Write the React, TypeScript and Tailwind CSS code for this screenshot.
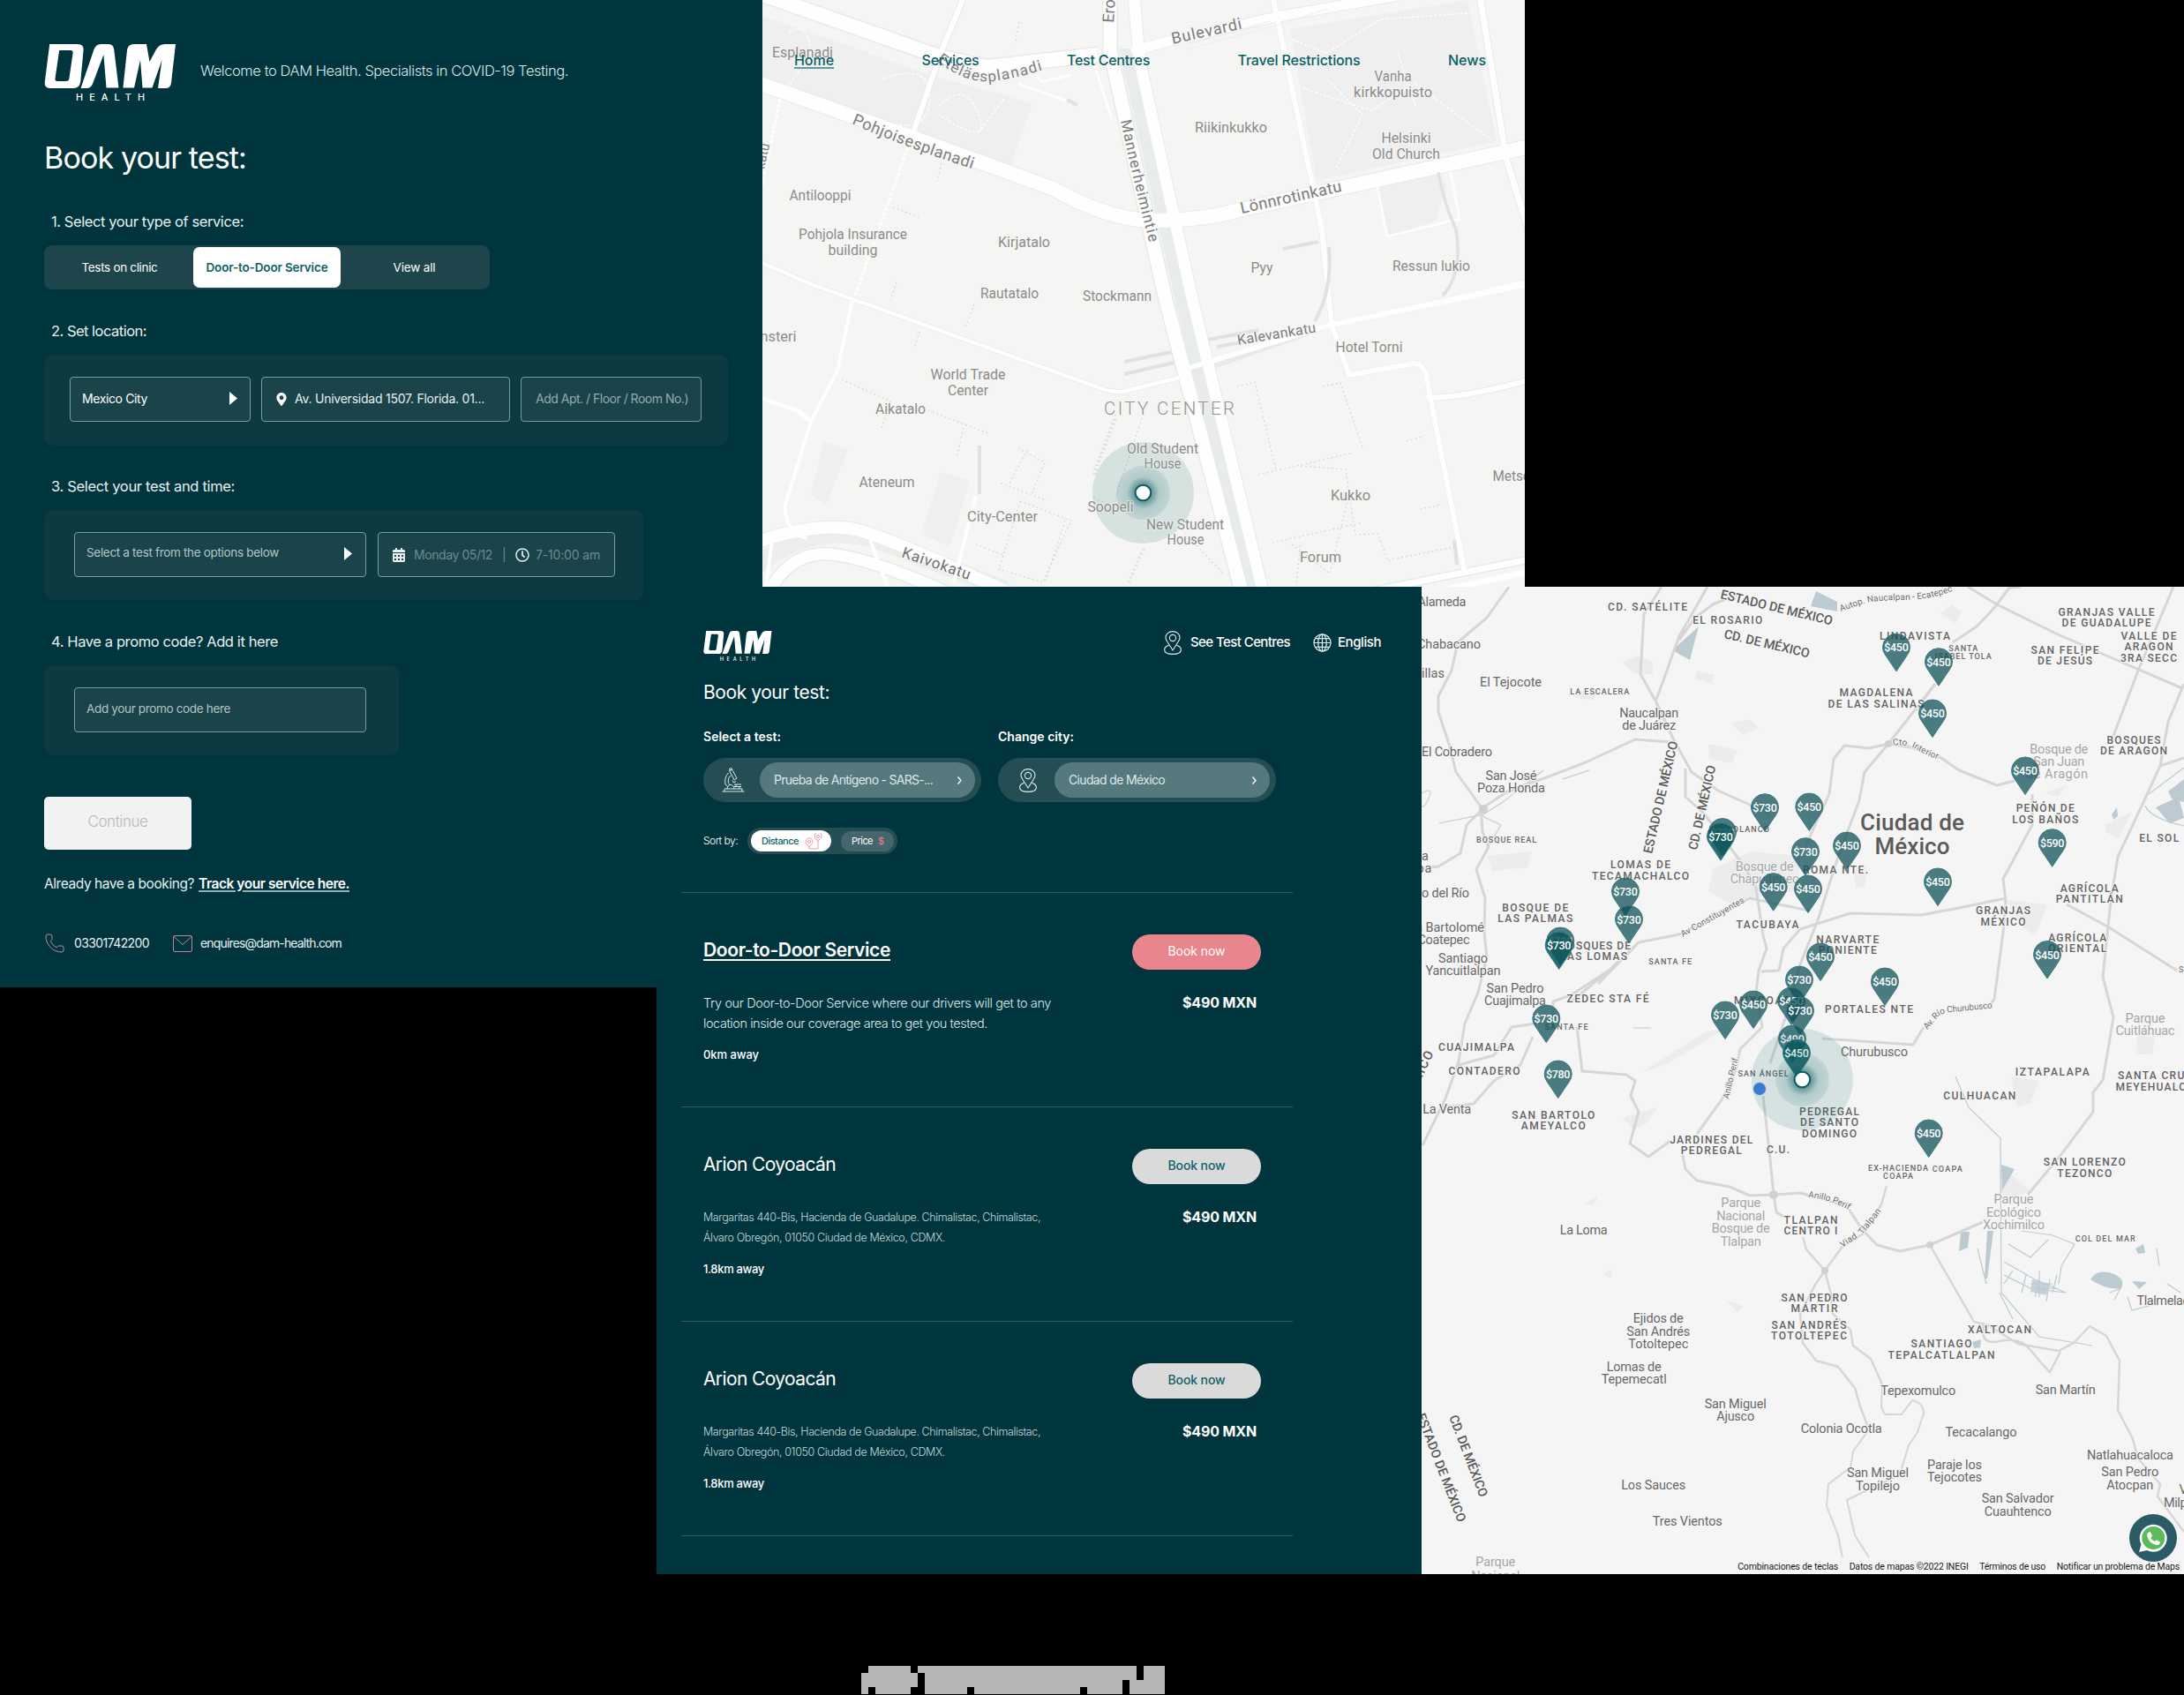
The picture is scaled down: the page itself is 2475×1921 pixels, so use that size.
import { useLayoutEffect, useRef } from "react";
import type { ReactNode } from "react";
import { FaCalendarAlt, FaMapMarkerAlt, FaRegClock, FaWhatsapp } from "react-icons/fa";
import { Phone } from "lucide-react";

/* ---------- Text helper: tracks a single line out to a given width ---------- */

function T({ w, className = "", children }: { w: number; className?: string; children: ReactNode }) {
  const ref = useRef<HTMLSpanElement>(null);
  useLayoutEffect(() => {
    const el = ref.current;
    if (!el) return;
    el.style.letterSpacing = "0px";
    const natural = el.getBoundingClientRect().width;
    const count = (el.textContent || "").length;
    el.style.letterSpacing = `${(w - natural) / count}px`;
  }, [w]);
  return (
    <span ref={ref} className={`inline-block shrink-0 whitespace-nowrap ${className}`}>
      {children}
    </span>
  );
}

/* ---------- Icons ---------- */

function Logo({ className = "" }: { className?: string }) {
  return (
    <svg viewBox="50 50 150 65" className={className} fill="#fff" role="img" aria-label="DAM Health">
      <path
        fillRule="evenodd"
        d="M56.2 50H88q7.200 0 6.600 7L91.300 92q-.8 8-8.300 8H56.500q-6.300 0-5.800-6.500zM67.200 57L62.500 89q-.3 3 2.200 3H75q3.100 0 3.400-3L82.600 60q.3-3-2.600-3z"
      />
      <path d="M91.500 100L106.500 56q2-6 8-6H123q5.500 0 6.200 6L134.500 99.500H120.500L117.400 62L105 95q-2 5-7 5z" />
      <path d="M139.400 99.500L144 57q.8-7 8-7H166L169.500 70L177 56q3.300-6 10-6H199L194 94q-.7 6-6.500 6H179L183.500 68L172.500 99.500H161.500L159 68L152 99.500z" />
      <text x="86" y="114.300" fontSize="10.800" fontWeight="500" fontFamily="Inter, sans-serif" textLength="78" lengthAdjust="spacing">
        HEALTH
      </text>
    </svg>
  );
}

function Arrow() {
  return (
    <svg viewBox="0 0 9 15" className="h-[15px] w-[9px]" fill="#fff">
      <path d="M0 0L9 7.500L0 15z" />
    </svg>
  );
}

function PinOutline() {
  return (
    <svg viewBox="0 0 20 27" className="h-[27px] w-5 shrink-0" fill="none" stroke="#dcebec" strokeWidth="1.100">
      <path d="M10 22L3.800 12.200Q2 9.600 2 7.600A8 7 0 0 1 18 7.600Q18 9.600 16.200 12.200z" />
      <circle cx="10" cy="8" r="3.600" />
      <path d="M5.600 16.200Q.6 18 .6 21.200Q.6 26.400 10 26.400T19.400 21.200Q19.400 18 14.400 16.200" />
    </svg>
  );
}

function GlobeGrid() {
  return (
    <svg viewBox="0 0 22 22" className="h-[21px] w-[21px] shrink-0" fill="none" stroke="#dcebec" strokeWidth="1.300">
      <circle cx="11" cy="11" r="10" />
      <ellipse cx="11" cy="11" rx="5" ry="10" />
      <path d="M11 1V21M1 11H21M2.600 6H19.400M2.600 16H19.400" />
    </svg>
  );
}

function Microscope() {
  return (
    <svg viewBox="0 0 26 28" className="h-7 w-[26px]" fill="none" stroke="#dcebec" strokeWidth="1">
      <path d="M.5 27H25.500M3 24H23M3 27V24M23 27V24M6 24Q6.500 19.500 10 19.500T14 24M14 19H22M14 21.500H22M16 21.500V19M20 24V21.500" />
      <path d="M8.500 3.500L11.500 2L17 12L14.200 14zM8.500 1.500L11 .5L11.500 2L9.300 3zM12 14.500L13.500 17L16 15.500" />
      <path d="M7.500 6Q2.500 11 4 19L6.500 21M10 9Q6.500 12 7.500 17.500L9 19.500" />
    </svg>
  );
}

function Envelope() {
  return (
    <svg viewBox="0 0 22 19" className="h-[19px] w-[22px] shrink-0" fill="none" stroke="#bd8792" strokeWidth="1">
      <rect x=".5" y=".5" width="21" height="18" rx="1.500" />
      <path d="M1 1.500L11 10.500L21 1.500" />
    </svg>
  );
}

function RouteIcon() {
  return (
    <svg viewBox="0 0 20 19" className="h-[19px] w-5" fill="none" stroke="#ec9aa2" strokeWidth="1">
      <path d="M15 9.500L11.500 5A4 4 0 1 1 18.500 5zM5 16L1.200 11.200A4 4 0 1 1 8.800 11.200z" />
      <circle cx="15" cy="4" r="1.500" />
      <circle cx="5" cy="10" r="1.500" />
      <path d="M5 16V18H15V9.500" />
    </svg>
  );
}

/* ---------- Booking form ---------- */

const fieldBox = "flex items-center rounded-[4px] border border-[#6f9fa4] bg-[#1b434a] text-sm";

function StepTitle({ w, className = "", children }: { w: number; className?: string; children: ReactNode }) {
  return (
    <h2 className={`pl-[8px] text-[16.500px] leading-6 text-[#e6f0f1] ${className}`}>
      <T w={w}>{children}</T>
    </h2>
  );
}

function BookingForm() {
  return (
    <section className="col-span-2 col-start-1 row-span-2 row-start-1 flex flex-col items-start bg-[#00353d] pt-[50px] pl-[50px] text-white">
      <header className="flex h-16 items-start gap-[27px]">
        <Logo className="h-[65px] w-[150px]" />
        <p className="mt-[18px] text-[16.500px] leading-6 font-light text-[#d9e9eb]">
          <T w={417}>Welcome to DAM Health. Specialists in COVID-19 Testing.</T>
        </p>
      </header>

      <h1 className="mt-[45px] text-[34px] leading-10">
        <T w={229}>Book your test:</T>
      </h1>

      <StepTitle w={218} className="mt-[40px]">1. Select your type of service:</StepTitle>
      <div className="mt-[15px] grid h-[50px] w-[505px] grid-cols-3 rounded-[9px] bg-[#1e454c] p-[2px] text-[13.500px]">
        <button className="flex items-center justify-center"><T w={86}>Tests on clinic</T></button>
        <button className="flex items-center justify-center rounded-[7px] bg-white font-semibold text-[#0d6267]">
          <T w={138}>Door-to-Door Service</T>
        </button>
        <button className="flex items-center justify-center"><T w={48}>View all</T></button>
      </div>

      <StepTitle w={108} className="mt-[35px]">2. Set location:</StepTitle>
      <div className="mt-[15px] flex h-[103px] w-[775px] items-start gap-3 rounded-[10px] bg-[#0d3a41] pt-[25px] pl-[29px]">
        <div className={`${fieldBox} h-[51px] w-[205px] justify-between pr-[14px] pb-[2px] pl-[13px]`}>
          <T w={74}>Mexico City</T>
          <Arrow />
        </div>
        <div className={`${fieldBox} h-[51px] w-[282px] gap-[9px] pb-[2px] pl-4`}>
          <FaMapMarkerAlt className="mt-[2px] h-[15px] w-[12px]" />
          <T w={215} className="text-[#e6f0f1]">Av. Universidad 1507. Florida. 01...</T>
        </div>
        <div className={`${fieldBox} h-[51px] w-[205px] pb-[2px] pl-4`}>
          <T w={173} className="text-[#93abaf]">Add Apt. / Floor / Room No.)</T>
        </div>
      </div>

      <StepTitle w={208} className="mt-[34px]">3. Select your test and time:</StepTitle>
      <div className="mt-[15px] flex h-[102px] w-[679px] items-start gap-[13px] rounded-[10px] bg-[#0d3a41] pt-[25px] pl-[34px]">
        <div className={`${fieldBox} h-[51px] w-[331px] justify-between pr-[15px] pb-[3px] pl-[13px]`}>
          <T w={218} className="text-[13.500px] text-[#b3c5c8]">Select a test from the options below</T>
          <Arrow />
        </div>
        <div className={`${fieldBox} h-[51px] w-[269px] pl-[15px] text-[#6b8b90]`}>
          <FaCalendarAlt className="size-4 text-[#e6eeef]" />
          <T w={89} className="ml-[9px]">Monday 05/12</T>
          <span className="ml-[11px] w-[15px]">|</span>
          <FaRegClock className="size-4 text-[#e6eeef]" />
          <T w={73} className="ml-[7px]">7-10:00 am</T>
        </div>
      </div>

      <StepTitle w={257} className="mt-[35px]">4. Have a promo code? Add it here</StepTitle>
      <div className="mt-[15px] h-[102px] w-[402px] rounded-[10px] bg-[#0d3a41] pt-[25px] pl-[34px]">
        <div className={`${fieldBox} h-[51px] w-[331px] pb-[2px] pl-[13px]`}>
          <T w={163} className="text-[13.500px] text-[#b3c5c8]">Add your promo code here</T>
        </div>
      </div>

      <button className="mt-[47px] flex h-[60px] w-[167px] items-center justify-center rounded-[5px] bg-[#f2f2f2] pb-[3px] text-[17px] font-light text-[#b9b9b9]">
        <T w={68}>Continue</T>
      </button>

      <p className="mt-[27px] flex gap-[5px] text-[15.500px] leading-6 text-[#e6f0f1]">
        <T w={170}>Already have a booking?</T>
        <a>
          <T w={171} className="font-semibold text-white underline decoration-[#8fb0b4] decoration-2 underline-offset-2">
            Track your service here.
          </T>
        </a>
      </p>

      <div className="mt-[43px] flex h-6 items-center text-sm text-[#e6f0f1]">
        <Phone className="size-6 text-[#bd8792]" strokeWidth={1} />
        <T w={85} className="ml-[10px]">03301742200</T>
        <span className="ml-[27px]"><Envelope /></span>
        <T w={160} className="ml-[9px]">enquires@dam-health.com</T>
      </div>
    </section>
  );
}

/* ---------- Map drawing primitives ---------- */

type RotatedLabel = { text: string; d: string; size: number; fill: string; len?: number; weight?: number };

function PathLabels({ id, items, font }: { id: string; items: RotatedLabel[]; font: string }) {
  return (
    <g fontFamily={font} stroke="#f6f6f5" strokeWidth="2" paintOrder="stroke">
      {items.map((l, i) => (
        <g key={i}>
          <path id={`${id}-${i}`} d={l.d} fill="none" stroke="none" />
          <text fontSize={l.size} fill={l.fill} fontWeight={l.weight ?? 400} textLength={l.len}>
            <textPath href={`#${id}-${i}`} textLength={l.len}>{l.text}</textPath>
          </text>
        </g>
      ))}
    </g>
  );
}

function LocationMarker({ id }: { id: string }) {
  return (
    <g>
      <defs>
        <radialGradient id={id}>
          <stop offset="0.280" stopColor="#0b6166" stopOpacity="0.620" />
          <stop offset="0.600" stopColor="#0b6166" stopOpacity="0.180" />
          <stop offset="1" stopColor="#0b6166" stopOpacity="0.100" />
        </radialGradient>
      </defs>
      <circle cx="431.400" cy="558.500" r="57.500" fill="#0b6166" fillOpacity="0.130" />
      <circle cx="431.400" cy="558.500" r="30.500" fill={`url(#${id})`} />
      <circle cx="431.400" cy="558.500" r="8.800" fill="#fff" stroke="#0b5b61" strokeWidth="2" />
    </g>
  );
}

/* ---------- Helsinki map ---------- */

type Label = [text: string, cx: number, y: number, w: number];

const helsinkiLabels: Label[] = [
  ["Esplanadi", 45.5, 65, 69],
  ["Vanha", 714.6, 92, 42],
  ["kirkkopuisto", 714.6, 110, 89],
  ["Riikinkukko", 531, 150, 82],
  ["Helsinki", 729.5, 162, 56],
  ["Old Church", 729.5, 180, 77],
  ["Antilooppi", 65.5, 227, 70],
  ["Pohjola Insurance", 102.5, 271, 123],
  ["building", 102.5, 289, 56],
  ["Kirjatalo", 296.5, 280, 59],
  ["Pyy", 566, 309, 25],
  ["Ressun lukio", 758, 307, 88],
  ["Rautatalo", 280, 338, 66],
  ["Stockmann", 402, 341, 78],
  ["nsteri", 18, 387, 41],
  ["Hotel Torni", 687.5, 399, 76],
  ["World Trade", 233, 430, 85],
  ["Center", 233, 448, 46],
  ["Aikatalo", 156.5, 469, 57],
  ["Old Student", 453.5, 514, 81],
  ["House", 453.5, 531, 42],
  ["Ateneum", 141, 552, 63],
  ["Soopeli", 394.5, 580, 52],
  ["City-Center", 272, 591, 80],
  ["New Student", 479, 600, 88],
  ["House", 479.5, 617, 42],
  ["Kukko", 666.5, 567, 45],
  ["Forum", 632.5, 637, 47],
  ["Metso", 849, 545, 43],
];

const helsinkiStreets: RotatedLabel[] = [
  { text: "Eteläesplanadi", d: "M197 69Q232 96 262 92T328 76", size: 17, fill: "#808080", len: 128 },
  { text: "Bulevardi", d: "M465 50L546 32", size: 18, fill: "#7d7d7d", len: 81 },
  { text: "Erottaja", d: "M398 26L402 -40", size: 18, fill: "#7d7d7d" },
  { text: "Pohjoisesplanadi", d: "M101 140Q165 168 240 192", size: 18, fill: "#7d7d7d", len: 146 },
  { text: "Mannerheimintie", d: "M406 137Q420 205 440 280", size: 17, fill: "#7d7d7d", len: 142 },
  { text: "Lönnrotinkatu", d: "M543 242L660 216", size: 18, fill: "#7d7d7d", len: 117 },
  { text: "Kalevankatu", d: "M539 391L630 376", size: 16, fill: "#7d7d7d", len: 90 },
  { text: "Kaivokatu", d: "M157 631L237 658", size: 17, fill: "#6f6f6f", len: 81 },
  { text: "katu", d: "M2 192L9 160", size: 15, fill: "#808080" },
];

const nav: [string, number][] = [
  ["Home", 45],
  ["Services", 65],
  ["Test Centres", 94],
  ["Travel Restrictions", 139],
  ["News", 43],
];

function HelsinkiMap() {
  return (
    <section className="relative col-span-2 col-start-3 row-start-1 overflow-hidden bg-[#f5f5f3]">
      <svg viewBox="0 0 864 665" className="h-[665px] w-[864px]">
        <g fill="#efeff0">
          <path d="M0 18L120 60L190 85L306 117L281 190L182 160L0 92z" />
          <path d="M598 33L799 0L832 160L628 205z" />
          <path d="M697 212L766 195L775 210L763 250L708 268z" />
          <path d="M70 500L97 510L72 572L55 560zM202 535L235 545L212 620L180 605z" />
        </g>
        <path d="M404 55L421 55L499 360L563 665L543 665L470 350z" fill="#e9ecec" />
        <path d="M-5 640Q60 590 130 612L275 668" fill="none" stroke="#eceeed" strokeWidth="20" />

        <g fill="none" stroke="#e8eae9" strokeLinejoin="round">
          <path d="M-5 -8L200 64L255 76L380 62" strokeWidth="19" />
          <path d="M-5 94L182 160L330 214Q390 248 440 250Q500 250 540 238L870 166" strokeWidth="18" />
          <path d="M394 -5V57L410 130L457 340L543 670" strokeWidth="18" />
          <path d="M421 -5L427 67L485 330L567 670" strokeWidth="15" />
          <path d="M-5 614Q60 592 105 600Q140 608 280 672" strokeWidth="16" />
          <path d="M8 670Q28 632 64 628Q105 625 210 672" strokeWidth="16" />
          <path d="M578 -5L634 260L645 368L665 425L738 412Q750 412 753 430L796 650" strokeWidth="7" />
          <path d="M813 -5L843 180L868 260" strokeWidth="9" />
          <path d="M229 -5L204 55L171 150" strokeWidth="8" />
          <path d="M0 298L55 322L386 441Q400 446 412 443L480 426L645 368L868 322" strokeWidth="6" />
          <path d="M753 451Q800 450 868 431" strokeWidth="8" />
          <path d="M680 672L868 634" strokeWidth="10" />
          <path d="M419 60Q440 50 500 38L578 20L720 -5" strokeWidth="13" />
        </g>
        <g fill="none" stroke="#fefefe" strokeLinejoin="round">
          <path d="M419 60Q440 50 500 38L578 20L720 -5" strokeWidth="11" />
          <path d="M0 298L55 322L386 441Q400 446 412 443L480 426" strokeWidth="4.500" />
          <path d="M480 418L645 368L868 322" strokeWidth="6" />
          <path d="M578 -5L634 260L645 368L665 425L738 412Q750 412 753 430L796 650" strokeWidth="6" />
          <path d="M813 -5L843 180L868 260" strokeWidth="7" />
          <path d="M229 -5L204 55L171 150" strokeWidth="6" />
          <path d="M171 150L105 335M20 112L0 210" strokeWidth="3" strokeDasharray="4 2" />
          <path d="M102 340L85 420L55 478L25 575Q28 604 50 610" strokeWidth="4" />
          <path d="M-5 450L39 465L55 478" strokeWidth="5" />
          <path d="M-5 -8L200 64L255 76L380 62" strokeWidth="16" />
          <path d="M-5 94L182 160L330 214Q390 248 440 250Q500 250 540 238L870 166" strokeWidth="16" />
          <path d="M394 -5V57L410 130L457 340L543 670" strokeWidth="15" />
          <path d="M421 -5L427 67L485 330L567 670" strokeWidth="13" />
          <path d="M-5 614Q60 592 105 600Q140 608 280 672" strokeWidth="14" />
          <path d="M8 670Q28 632 64 628Q105 625 210 672" strokeWidth="13" />
          <path d="M753 451Q800 450 868 431" strokeWidth="6" />
          <path d="M680 672L868 634M720 680L868 648" strokeWidth="7" />
          <path d="M242 562L217 660M11 612L4 665M122 612L142 665" strokeWidth="4" />
          <path d="M290 95L355 118M310 84L316 93L350 85M375 70L396 135M697 212L708 268L790 248L780 195M772 340L868 318" strokeWidth="2.500" />
          <path d="M30 38Q50 20 55 60L28 100M135 90Q190 70 190 110T145 140M200 120Q230 90 245 130T200 130M245 150L275 110M600 45L640 60L700 22L799 15M612 100L690 125L740 95L828 160M650 190L680 130L640 90M720 60L740 120" strokeWidth="1.500" strokeDasharray="3 2" />
        </g>
        <path d="M480 56L578 30L640 10M482 50L575 24" fill="none" stroke="#eceeed" strokeWidth="1" />
        <g fill="none" stroke="#e0e2e1" strokeWidth="4">
          <path d="M766 195Q772 230 786 260Q794 310 771 335" strokeWidth="3.500" />
          <path d="M590 282L630 274M642 280Q646 330 626 364M410 410L463 399M410 424L466 411M505 385L562 374M515 393L570 383" />
          <path d="M345 113L357 119M246 505V560M784 612L787 640" />
        </g>
        <g fill="none" stroke="#d4d6d6" strokeWidth="1.200" strokeDasharray="2 3">
          <path d="M291 25L286 50M90 430L145 455L135 485M188 465L258 492M228 485L220 518M290 508L320 524L305 560M300 510L280 548M270 548L322 567M292 568L350 590L345 600L318 660L268 645L292 568M375 564L400 575M430 474L400 565M242 617L275 630M343 590L320 660" />
          <path d="M148 235L177 246M203 185L198 205M152 320L145 340M240 345L230 370M178 376L172 394M400 470L375 535M538 438L558 433L582 533M635 438L655 434L680 507M562 538L670 513M610 528L661 532L672 606L698 605L708 635L784 620M578 615L655 598L680 592M600 617L643 650L665 560M730 500L750 494M745 577L770 572M475 600L522 650M605 660L610 615" />
          <path d="M432 622L415 660M400 475L375 540" stroke="#dfe1e0" strokeWidth="3.500" />
        </g>

        <LocationMarker id="glow-helsinki" />

        <g fontFamily="Roboto, sans-serif" fontSize="16" fill="#8c8c8c" textAnchor="middle" stroke="#f5f5f3" strokeWidth="2" paintOrder="stroke" strokeOpacity="0.600">
          {helsinkiLabels.map(([text, cx, y, w], i) => (
            <text key={i} x={cx} y={y} textLength={w} lengthAdjust="spacingAndGlyphs">{text}</text>
          ))}
          <text x="461" y="470" fontSize="20.500" fontWeight="300" fill="#939393" textLength="148">CITY CENTER</text>
        </g>
        <PathLabels id="hel" items={helsinkiStreets} font="Roboto, sans-serif" />
      </svg>

      <nav className="absolute top-[56px] left-[36px] flex gap-[99.500px] text-base leading-6 font-medium text-[#0a5f65]">
        {nav.map(([label, w], i) => (
          <a key={label}>
            <T w={w} className={i === 0 ? "underline decoration-[#5f9a9e] decoration-2 underline-offset-2" : ""}>
              {label}
            </T>
          </a>
        ))}
      </nav>
    </section>
  );
}

/* ---------- Test centre list ---------- */

function SelectPill({ icon, label, w }: { icon: ReactNode; label: string; w: number }) {
  return (
    <div className="flex h-[50px] w-[315px] items-center rounded-full bg-[#254d54] pr-[7px]">
      <span className="flex flex-1 items-center justify-center pl-[4px]">{icon}</span>
      <div className="flex h-10 w-[244px] items-center justify-between rounded-full bg-[#56797e] pr-[15px] pl-4 text-sm text-[#dde8ea]">
        <T w={w}>{label}</T>
        <svg viewBox="0 0 5 9" className="h-[9px] w-[5px]" fill="none" stroke="#fff" strokeWidth="1.300">
          <path d="M.5.5L4 4.500L.5 8.500" />
        </svg>
      </div>
    </div>
  );
}

type Centre = { name: string; nameW: number; lines: [string, number][]; away: string; awayW: number; featured?: boolean };

const arion: Centre = {
  name: "Arion Coyoacán",
  nameW: 150,
  lines: [
    ["Margaritas 440-Bis, Hacienda de Guadalupe. Chimalistac, Chimalistac,", 382],
    ["Álvaro Obregón, 01050 Ciudad de México, CDMX.", 274],
  ],
  away: "1.8km away",
  awayW: 69,
};

const centres: Centre[] = [
  {
    name: "Door-to-Door Service",
    nameW: 212,
    lines: [
      ["Try our Door-to-Door Service where our drivers will get to any", 394],
      ["location inside our coverage area to get you tested.", 322],
    ],
    away: "0km away",
    awayW: 63,
    featured: true,
  },
  arion,
  arion,
];

function CentreRow({ c }: { c: Centre }) {
  return (
    <li className="flex h-[243px] justify-between border-b border-[#2f6065] pr-[36px] pl-[25px]">
      <div className="pt-[53px]">
        <h3 className={`text-[21px] leading-6 ${c.featured ? "font-semibold" : ""}`}>
          <T w={c.nameW} className={c.featured ? "underline decoration-2 underline-offset-[3px]" : ""}>{c.name}</T>
        </h3>
        <p
          className={`mt-[36px] flex flex-col items-start leading-[23px] font-light ${
            c.featured ? "text-[14.500px] text-[#dbe9eb]" : "text-[12.500px] text-[#c2d8db]"
          }`}
        >
          {c.lines.map(([line, w]) => (
            <T key={line} w={w}>{line}</T>
          ))}
        </p>
        <p className="mt-[14px] text-[13px] leading-5 font-medium"><T w={c.awayW}>{c.away}</T></p>
      </div>
      <div className="flex w-[146px] flex-col items-center pt-[47px]">
        <button
          className={`flex h-10 w-[146px] items-center justify-center rounded-full pb-[2px] text-sm ${
            c.featured ? "bg-[#e9858c] text-white" : "bg-[#dadada] font-medium text-[#0d6267]"
          }`}
        >
          <T w={65}>Book now</T>
        </button>
        <p className="mt-[25px] self-end pr-[5px] text-base leading-6 font-bold"><T w={84}>$490 MXN</T></p>
      </div>
    </li>
  );
}

function CentreList() {
  return (
    <section className="col-span-2 col-start-2 row-span-2 row-start-2 bg-[#00353d] text-white">
      <div className="pl-[53px]">
        <header className="flex h-[84px] items-end justify-between pr-[46px]">
          <Logo className="h-[34px] w-[78px]" />
          <div className="flex h-[34px] items-start text-[15px] leading-7 font-medium">
            <PinOutline />
            <T w={113} className="mt-[-1px] ml-[10px]">See Test Centres</T>
            <span className="mt-[3px] ml-[26px]"><GlobeGrid /></span>
            <T w={49} className="mt-[-1px] ml-[7px]">English</T>
          </div>
        </header>
        <h2 className="mt-[24px] text-[21px] leading-6"><T w={143}>Book your test:</T></h2>

        <div className="mt-[28px] flex gap-[19px]">
          <div className="w-[315px]">
            <p className="h-[34px] text-sm leading-5 font-semibold"><T w={88}>Select a test:</T></p>
            <SelectPill icon={<Microscope />} label="Prueba de Antígeno - SARS-..." w={180} />
          </div>
          <div className="w-[315px]">
            <p className="h-[34px] text-sm leading-5 font-semibold"><T w={86}>Change city:</T></p>
            <SelectPill icon={<PinOutline />} label="Ciudad de México" w={109} />
          </div>
        </div>

        <div className="mt-[29px] flex h-[30px] items-center text-xs">
          <T w={39} className="font-light">Sort by:</T>
          <div className="ml-[11px] flex h-[30px] w-[170px] items-center justify-between rounded-full bg-[#254d54] px-1">
            <span className="flex h-6 w-[91px] items-center justify-between rounded-full bg-white pr-[10px] pl-3 text-[11px] font-medium text-[#0d6267]">
              <T w={42}>Distance</T>
              <RouteIcon />
            </span>
            <span className="flex h-[23px] w-[60px] items-center gap-[6px] rounded-full bg-[#45666c] pl-3 text-[11px]">
              <T w={24}>Price</T>
              <span className="text-[#e9858c]">$</span>
            </span>
          </div>
        </div>
      </div>

      <ul className="mt-[43px] ml-[28px] w-[693px] border-t border-[#2f6065]">
        {centres.map((c, i) => (
          <CentreRow key={i} c={c} />
        ))}
      </ul>
    </section>
  );
}

/* ---------- Mexico City map ---------- */

const towns: Label[] = [
  ["Alameda", 23, 22, 55], ["Chabacano", 31, 70, 72], ["illas", 13, 103, 26], ["El Tejocote", 101, 113, 70],
  ["Naucalpan", 257.7, 148, 67], ["de Juárez", 257.7, 162, 61], ["El Cobradero", 40, 192, 80],
  ["San José", 101.5, 219, 58], ["Poza Honda", 101.5, 233, 77], ["a", 4, 310, 8], ["pa", 3, 324, 17],
  ["o del Río", 27, 352, 54], ["n Bartolomé", 32, 391, 78], ["Coatepec", 25, 405, 59],
  ["Santiago", 47, 426, 56], ["Yancuitlalpan", 47, 440, 85], ["San Pedro", 106, 460, 65], ["Cuajimalpa", 106, 474, 70],
  ["Churubusco", 513, 531.5, 76], ["La Venta", 28.7, 597, 55], ["La Loma", 183.7, 733.5, 54],
  ["Ejidos de", 268.3, 834, 57], ["San Andrés", 268.3, 848.7, 72], ["Totoltepec", 268.3, 863, 68],
  ["Lomas de", 240.7, 888.7, 62], ["Tepemecatl", 240.7, 903, 74], ["San Miguel", 355.7, 930.5, 70], ["Ajusco", 355.7, 945, 43],
  ["Los Sauces", 262.7, 1023, 73], ["Tres Vientos", 301.3, 1064, 79], ["Tepexomulco", 562.7, 915.6, 85],
  ["San Martín", 729.7, 914.5, 68], ["Colonia Ocotla", 475.7, 959, 92], ["Tecacalango", 634, 963, 81],
  ["Paraje los", 604, 1000, 62], ["Tejocotes", 604, 1014, 62], ["Natlahuacaloca", 803, 989.4, 98],
  ["San Pedro", 802.7, 1008, 65], ["Atocpan", 802.7, 1022.5, 53], ["San Miguel", 517, 1009, 70], ["Topilejo", 517, 1023.6, 50],
  ["San Salvador", 675.7, 1038, 82], ["Cuauhtenco", 675.7, 1052.6, 76], ["Milpa", 858, 1042.5, 34], ["Villa", 871, 1027.6, 25],
  ["Tlalmelaca", 844, 813.5, 67],
];

const parks: Label[] = [
  ["Bosque de", 388.7, 321.5, 66], ["Chapultepec", 388.7, 336, 78], ["Bosque de", 722.3, 188.6, 66],
  ["San Juan", 722.3, 203, 58], ["de Aragón", 720, 217, 70], ["Parque", 820, 494, 45], ["Cuitláhuac", 820, 508, 67],
  ["Parque", 361.7, 703.3, 45], ["Nacional", 361.7, 718, 55], ["Bosque de", 361.7, 732, 66], ["Tlalpan", 361.7, 746.6, 46],
  ["Parque", 671, 699.3, 45], ["Ecológico", 671, 713.5, 62], ["Xochimilco", 671, 728, 70],
  ["Parque", 83.7, 1110, 45], ["Nacional", 83.7, 1126, 55],
];

const areas: Label[] = [
  ["CD. SATÉLITE", 256, 26.5, 90], ["EL ROSARIO", 346.7, 42, 79], ["LOMAS DE", 248, 319, 68], ["TECAMACHALCO", 248, 332, 110],
  ["BOSQUE DE", 128.7, 367.6, 75], ["LAS PALMAS", 128.7, 380, 85], ["BOSQUES DE", 197, 410.5, 80], ["LAS LOMAS", 195, 423, 76],
  ["ZEDEC STA FÉ", 211, 471, 93], ["TACUBAYA", 392, 387, 71], ["MIXCOAC", 386, 473, 64], ["CUAJIMALPA", 62, 526, 86],
  ["CONTADERO", 71, 553, 81], ["LINDAVISTA", 559, 60, 80], ["GRANJAS VALLE", 776, 33, 109], ["DE GUADALUPE", 776, 45, 101],
  ["SAN FELIPE", 729, 76, 77], ["DE JESÚS", 729, 88, 62], ["VALLE DE", 824, 60, 63], ["ARAGON", 824, 72, 55], ["3RA SECC", 824, 84.5, 64],
  ["MAGDALENA", 515, 124, 83], ["DE LAS SALINAS", 515, 136.5, 109], ["BOSQUES", 807, 178, 61], ["DE ARAGON", 807, 190, 76],
  ["PEÑÓN DE", 706.7, 255, 66], ["LOS BAÑOS", 706.7, 267.6, 75], ["EL SOL", 835.7, 289, 45], ["ROMA NTE.", 469, 325, 74],
  ["AGRÍCOLA", 756.7, 345.5, 66], ["PANTITLÁN", 756.7, 358, 76], ["GRANJAS", 659, 371, 62], ["MÉXICO", 659, 384, 51],
  ["NARVARTE", 482.7, 404, 71], ["PONIENTE", 482.7, 416, 66], ["AGRÍCOLA", 743.3, 402, 66], ["ORIENTAL", 743.3, 414, 66],
  ["PORTALES NTE", 507, 483, 100], ["IZTAPALAPA", 714.7, 554, 84], ["SANTA CRUZ", 831, 558, 84], ["MEYEHUALCO", 831, 571, 89],
  ["SAN BARTOLO", 149.3, 603, 94], ["AMEYALCO", 149.3, 615.3, 73], ["JARDINES DEL", 328.3, 630.6, 94], ["PEDREGAL", 328.3, 643, 69],
  ["C.U.", 404, 642, 26], ["TLALPAN", 441, 722, 61], ["CENTRO I", 441, 734, 61], ["CULHUACAN", 632.3, 581, 82],
  ["PEDREGAL", 462, 599, 68], ["DE SANTO", 462, 611, 66], ["DOMINGO", 462, 623.7, 62], ["SAN LORENZO", 751.3, 656.4, 93],
  ["TEZONCO", 751.3, 669, 62], ["SAN PEDRO", 445, 809.5, 75], ["MÁRTIR", 445, 822, 53], ["SAN ANDRÉS", 439, 841, 85],
  ["TOTOLTEPEC", 439, 853.4, 86], ["XALTOCAN", 655, 846, 72], ["SANTIAGO", 589, 862, 69], ["TEPALCATLALPAN", 589, 874.5, 121],
];

const minors: Label[] = [
  ["LA ESCALERA", 201.7, 122, 67], ["BOSQUE REAL", 96, 290, 68], ["POLANCO", 370, 277.6, 48], ["SANTA FE", 281.7, 427.6, 49],
  ["SANTA FE", 164, 502, 49], ["SANTA", 613.7, 72.6, 33], ["ISABEL TOLA", 613.7, 81.5, 64], ["SAN ÁNGEL", 387, 554.7, 57],
  ["EX-HACIENDA", 540, 661.5, 68], ["COAPA", 540, 670.6, 34], ["COAPA", 595.7, 662.6, 34], ["COL DEL MAR", 774.7, 742, 68],
];

const borders: RotatedLabel[] = [
  { text: "ESTADO DE MÉXICO", d: "M338 13L466 44", size: 14.5, fill: "#5c5c5c", len: 130, weight: 500 },
  { text: "CD. DE MÉXICO", d: "M342 58L441 81", size: 14.5, fill: "#5c5c5c", len: 99, weight: 500 },
  { text: "ESTADO DE MÉXICO", d: "M261 303L291 174", size: 14.5, fill: "#5c5c5c", len: 130, weight: 500 },
  { text: "CD. DE MÉXICO", d: "M312 299L334 201", size: 14.5, fill: "#5c5c5c", len: 98, weight: 500 },
  { text: "CD. DE MÉXICO", d: "M31 941L67 1035", size: 14.5, fill: "#5c5c5c", len: 98, weight: 500 },
  { text: "ESTADO DE MÉXICO", d: "M-6 939L42 1063", size: 14.5, fill: "#5c5c5c", len: 131, weight: 500 },
  { text: "MÉXICO", d: "M-12 583L18 520", size: 14.5, fill: "#5c5c5c", len: 60, weight: 500 },
  { text: "Av Constituyentes", d: "M296 397L369 356", size: 10, fill: "#6c6c6c", len: 81 },
  { text: "Anillo Perif.", d: "M348 581L360 530", size: 10, fill: "#6c6c6c", len: 50 },
  { text: "Autop. Naucalpan - Ecatepec", d: "M475 28L501 19Q515 15 545 15T604 4", size: 10, fill: "#6c6c6c", len: 130 },
  { text: "Cto. Interior", d: "M534 180Q550 178 560 184T588 197", size: 10, fill: "#6c6c6c", len: 54 },
  { text: "Av. Río Churubusco", d: "M573 502L584 489Q590 482 602 482L650 477", size: 10, fill: "#6c6c6c", len: 82 },
  { text: "Anillo Perif.", d: "M438 692Q465 694 488 709", size: 10, fill: "#6c6c6c", len: 51 },
  { text: "Viad. Tlalpan", d: "M477 749L501 733L523 705", size: 10, fill: "#6c6c6c", len: 61 },
  { text: "S", d: "M858 437L868 437", size: 9, fill: "#6c6c6c" },
];

type Price = [price: string, x: number, y: number, dark?: boolean];

const pins: Price[] = [
  ["$730", 389, 234.7], ["$450", 439.3, 234], ["$730", 341, 262.6], ["$730", 339, 267.6, true], ["$730", 435, 284.7],
  ["$450", 398.7, 324.7], ["$450", 438, 327], ["$730", 231, 330], ["$730", 235, 361.5], ["$730", 157.3, 386], ["$730", 155.7, 391, true],
  ["$450", 452, 404], ["$730", 428, 430], ["$450", 419, 454], ["$730", 429, 465], ["$450", 376, 458], ["$730", 344, 470],
  ["$490", 420, 497], ["$450", 425, 513, true], ["$730", 141.3, 474], ["$780", 154.7, 537], ["$450", 538, 53.3],
  ["$450", 586, 69.7], ["$450", 579, 128], ["$450", 684, 193], ["$590", 714.7, 274.7], ["$450", 482, 278], ["$450", 585, 319],
  ["$450", 525, 432], ["$450", 709, 401.5], ["$450", 574.7, 604],
];

const credits: [string, number][] = [
  ["Combinaciones de teclas", 114],
  ["Datos de mapas ©2022 INEGI", 135],
  ["Términos de uso", 75],
  ["Notificar un problema de Maps", 139],
];

function LabelGroup({ items, size, fill, weight = 400 }: { items: Label[]; size: number; fill: string; weight?: number }) {
  return (
    <g fontSize={size} fill={fill} fontWeight={weight}>
      {items.map(([text, cx, y, w], i) => (
        <text key={i} x={cx} y={y} textLength={w}>{text}</text>
      ))}
    </g>
  );
}

function MexicoMap() {
  return (
    <section className="relative col-span-2 col-start-4 row-span-2 row-start-2 overflow-hidden bg-[#f5f5f5]">
      <svg viewBox="0 0 864 1119" className="h-[1119px] w-[864px]">
        <g fill="#ececec">
          <path d="M228 85L245 78L262 85L262 100L240 98zM312 95L332 100L328 110L310 104zM325 178L358 185L352 200L326 195zM350 155L372 150L382 160L365 168z" />
          <path d="M330 320L372 300L430 305L425 345L390 350L350 360L325 345zM75 305L125 300L120 318L80 322zM165 120L200 118L195 128L180 127z" />
          <path d="M588 30L600 20L612 28L605 42zM663 355L710 360L695 395L680 385zM775 270L805 255L800 265L790 285L775 278zM715 230L730 225L722 238L706 235z" />
          <path d="M812 500L832 505L828 530L810 530zM228 602L267 590L255 608L240 615zM655 655L690 685L672 692L655 688zM490 320L505 315L502 340L492 342z" />
          <path d="M182 700L200 690L195 700zM205 780L215 773L215 783zM345 808L365 815L358 823zM668 555L700 560L690 585L675 590zM320 505L345 500L280 540L250 550z" />
        </g>
        <g fill="#bccbd1">
          <path d="M314 45L304 83L284 72zM441 22L447 5L471 17V28zM657 655L672 660L658 684zM611 731L621 731L619 749L609 753zM641 730H648L641 784H638z" />
          <path d="M758 785Q765 772 785 779Q798 785 793 795Q775 797 758 785zM805 787L822 788L813 796zM809 750L818 745L820 755L812 756zM624 856L634 853L633 862L626 863z" />
          <path d="M846 232L864 218V244L850 240zM832 250L858 238L864 262L848 268zM782 258L788 250L789 260L784 264z" />
        </g>
        <g fill="none" stroke="#bccbd1" strokeWidth="1.200">
          <path d="M820 248Q825 262 864 271M824 235L864 205M605 555L620 590L656 625L657 800L700 850L760 860M680 730L715 735L740 745L725 770L722 790" />
          <path d="M660 765L695 785L730 800L690 795L660 780M670 775L660 790M685 780L680 800M700 785L695 805M705 790V800M712 785L708 810M720 780L715 800M665 745L690 760L710 740M630 750L640 790M655 800L670 830M160 218L190 208M98 234L120 222L138 208M92 244L70 258L20 268M240 500H260" />
          <path d="M780 800L792 795L785 808M800 805L805 820L835 812M845 790L860 800M833 750L836 770M690 790H715M695 795H720M700 775V805" />
        </g>
        <path d="M692 785L712 790L708 803L690 799z" fill="#bccbd1" fillOpacity="0.800" />

        <g fill="none" stroke="#d6d6d6" strokeWidth="3" strokeLinejoin="round">
          <path d="M99 0L74 35L41 63L34 95L19 124V142L31 178L39 210L67 249L69 278L76 295L62 320L72 353L71 392L74 420L64 460L49 495L42 538L36 555L27 580L1 633" />
          <path d="M67 252L99 231L139 217L186 199L242 173L282 176M69 252L51 270L44 302L19 317L0 319" />
          <path d="M272 0L252 31L248 99L266 131L286 174L306 210L336 231L372 247L395 258M324 0L292 56L266 128M360 8L330 20L310 35L292 60" />
          <path d="M299 206V238L319 256L366 317L379 342L387 395L391 410L382 435L379 460L386 499L361 524L357 545L341 580L312 620" />
          <path d="M246 403L292 394L372 353L439 367M246 403L212 435L169 463L149 470V492L102 499L82 531L42 542M200 450L246 403L230 420L170 470" />
          <path d="M126 510L112 542L82 560L59 586L22 590M176 499L182 549L232 553L242 560L237 577L246 595L236 631L257 646L282 628" />
          <path d="M296 644L299 660L312 673L349 680L372 690L399 689L429 687L482 702L499 728L516 746L542 753L576 746L636 720" />
          <path d="M387 577L394 639L399 689L402 709L411 714M385 436L405 435L410 410L429 388L486 370L566 372L609 364L662 353" />
          <path d="M692 235V270L659 331L662 356L659 392L649 467L642 478M569 499L557 519L454 512M529 178L554 182L589 194L609 208L652 225L672 220" />
          <path d="M582 110L529 178L507 183L479 180L467 195L462 235L436 292M529 178L502 210L496 242L472 306L449 378L429 428L415 480L395 540" />
          <path d="M582 110L560 140M602 63L629 45L649 24L666 1L679 0M619 0L652 20L719 53L776 78L862 115M852 0L812 95L784 169" />
          <path d="M864 110L846 153L837 203L819 242L789 306L781 356L772 442L784 488L772 559L761 573V595L726 642L687 689M837 203L864 194M731 360L779 386L856 435" />
          <path d="M576 746L626 833L642 837L676 858L722 866L739 857L757 838L776 849L791 877L789 933L806 966L812 988L837 1017L834 1031L864 1071M637 837Q632 860 655 855T690 865T712 890L724 867" strokeWidth="2.500" />
          <path d="M527 679L521 700L501 733L476 749L457 775L464 802L466 824L486 842L489 860L509 875L522 904M432 737L436 751L457 775L446 791L429 824L432 857L447 877L472 884L491 908L497 929L507 955" strokeWidth="2.500" />
          <path d="M522 904L521 929Q524 940 529 938L544 938L556 922Q569 925 569 937L562 958L552 973L542 1006L482 1035L491 1075L507 1100M507 955L489 980L486 998L461 1017L459 1042L472 1075L477 1100" strokeWidth="2" />
          <path d="M72 300L90 270L69 260M92 244L120 222M-2 235Q15 225 8 240T-2 245" strokeWidth="1.500" />
        </g>
        <g fill="#d0d0d0">
          <circle cx="399" cy="689" r="5" />
          <circle cx="70" cy="252" r="5" />
          <circle cx="576" cy="746" r="4" />
          <circle cx="457" cy="775" r="4" />
          <circle cx="529" cy="178" r="4" />
        </g>

        <g fontFamily="Roboto, sans-serif" textAnchor="middle" stroke="#f5f5f5" strokeWidth="2" paintOrder="stroke">
          <LabelGroup items={parks} size={14.5} fill="#a6a6a6" />
          <LabelGroup items={towns} size={14.5} fill="#686868" />
          <LabelGroup items={areas} size={12} fill="#646464" weight={500} />
          <LabelGroup items={minors} size={9} fill="#696969" weight={500} />
          <g fontSize="26" fill="#5a5a5a" fontWeight="500">
            <text x="556" y="276" textLength="118">Ciudad de</text>
            <text x="556" y="302.600" textLength="85">México</text>
          </g>
        </g>
        <PathLabels id="mex" items={borders} font="Roboto, sans-serif" />

        <circle cx="383" cy="569" r="8.500" fill="#e3edf6" />
        <circle cx="383" cy="569" r="7" fill="#4380e0" />

        <g fontFamily="Roboto, sans-serif" fontSize="12.500" fontWeight="500" textAnchor="middle">
          {pins.map(([price, x, y, dark], i) => (
            <g key={i} transform={`translate(${x} ${y})`}>
              <path
                d="M0 42.500L-12.500 24Q-15.500 20 -15.500 15.300A15.500 15.300 0 0 1 15.500 15.300Q15.500 20 12.500 24z"
                fill={dark ? "#0b565c" : "#0d5058"}
                fillOpacity={dark ? 0.86 : 0.74}
                stroke="#3c787e"
                strokeWidth="1"
              />
              <text x="0" y="20" fill="#fff" textLength="27.500">{price}</text>
            </g>
          ))}
        </g>
        <LocationMarker id="glow-mexico" />
      </svg>

      <footer className="absolute right-[5px] bottom-0 flex h-[16px] items-center gap-[12.500px] bg-[#f5f5f5]/70 font-['Roboto'] text-[10.500px] text-[#1c1c1c]">
        {credits.map(([label, w]) => (
          <T key={label} w={w}>{label}</T>
        ))}
      </footer>
      <div className="absolute top-[1051px] left-[802px] grid size-[54px] place-items-center rounded-full bg-[#2a5b66]">
        <svg viewBox="0 0 34 34" className="col-start-1 row-start-1 size-[34px]">
          <path d="M1 33L3.500 24.500A15.500 15.500 0 1 1 10 31z" fill="#fff" />
          <circle cx="17.300" cy="17" r="13" fill="#5cba5a" />
        </svg>
        <svg viewBox="0 0 24 24" className="col-start-1 row-start-1 size-[17px]" fill="#fff">
          <path d="M7 1.500L10 8.200L7.500 11.200Q9.800 15.300 13.800 17L16.500 14.300L22.500 17.500Q22.500 22.500 17.500 22.500Q5 21.500 1.500 7.500Q1.500 2 7 1.500z" />
        </svg>
      </div>
    </section>
  );
}

/* ---------- Page ---------- */

export default function App() {
  return (
    <main className="h-[1921px] w-[2475px] overflow-hidden bg-black font-['Inter',sans-serif]">
      <div className="grid grid-cols-[744px_120px_747px_117px_747px] grid-rows-[665px_454px_665px]">
        <BookingForm />
        <HelsinkiMap />
        <CentreList />
        <MexicoMap />
      </div>
      <svg viewBox="0 0 344 32" className="mt-[104px] ml-[976px] h-8 w-[344px]" fill="#b6b6b6" shapeRendering="crispEdges">
        <path d="M8 0H56V8H8zM64 0H312V8H64zM320 0H344V16H320zM0 8H64V24H0zM72 8H312V16H72zM72 16H296V24H72zM304 16H344V32H304zM0 24H8V32H0zM16 24H56V32H16zM72 24H120V32H72zM128 24H248V32H128zM256 24H296V32H256z" />
      </svg>
    </main>
  );
}
